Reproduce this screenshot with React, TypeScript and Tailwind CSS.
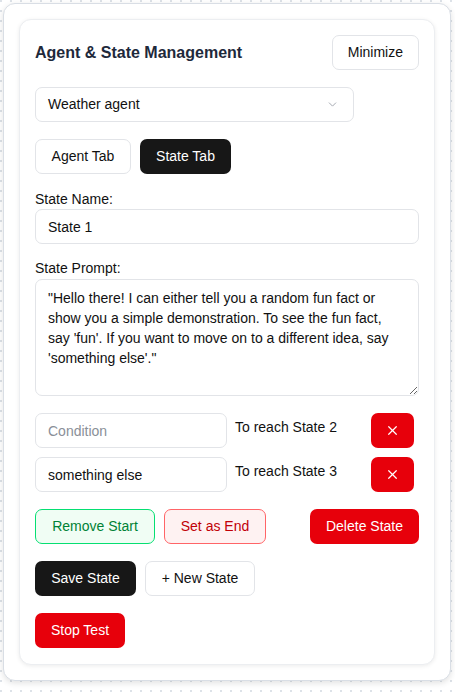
import React from "react";

const font = { fontFamily: '"Liberation Sans", Arial, sans-serif' };

export default function App() {
  return (
    <div
      className="min-h-[692px] w-[455px] bg-white bg-[radial-gradient(#dde2e8_1px,transparent_1px)] bg-[size:10px_10px] bg-[position:-4px_-4px] pt-[3px] pl-[3px] pr-[4px] pb-[6px]"
      style={font}
    >
      <div className="rounded-[12px] border border-[#d9dee5] bg-white px-[15px] pt-[15px] pb-[15px] shadow-[0_2px_6px_rgba(0,0,0,0.12)]">
        <div className="flex flex-col gap-[17px] rounded-[12px] border border-[#eceef1] bg-white px-[15px] pt-[15px] pb-[16px] shadow-[0_1px_4px_rgba(0,0,0,0.08)] text-[14px] text-[#111827]">
          <div className="flex items-center justify-between">
            <h2 className="text-[16px] font-bold text-[#1e293b]">Agent &amp; State Management</h2>
            <button className="h-[35px] rounded-[7px] border border-[#e2e4e8] bg-white px-[15px] text-[14px] text-[#111]">
              Minimize
            </button>
          </div>

          <div className="flex h-[35px] w-[319px] items-center justify-between rounded-[7px] border border-[#e2e4e8] bg-white pl-[12px] pr-[14px]">
            <span className="text-[#111]">Weather agent</span>
            <svg width="13" height="13" viewBox="0 0 24 24" fill="none" stroke="#a3a8b0" strokeWidth="1.8" strokeLinecap="round" strokeLinejoin="round">
              <path d="m6 9 6 6 6-6" />
            </svg>
          </div>

          <div className="flex gap-[9px]">
            <button className="h-[35px] w-[96px] rounded-[7px] border border-[#e2e4e8] bg-white text-[#111]">Agent Tab</button>
            <button className="h-[35px] w-[91px] rounded-[7px] bg-[#171717] text-white">State Tab</button>
          </div>

          <div className="-mt-[2px] flex flex-col">
            <label className="leading-[20px] text-[#111]">State Name:</label>
            <input
              className="h-[35px] w-full rounded-[7px] border border-[#e2e4e8] bg-white px-[12px] text-[14px] text-[#111] outline-none"
              defaultValue="State 1"
              style={font}
            />
            <label className="mt-[14px] leading-[20px] text-[#111]">State Prompt:</label>
            <textarea
              className="mt-[1px] h-[117px] w-full resize-y rounded-[7px] border border-[#e2e4e8] bg-white px-[12px] pt-[8px] text-[14px] leading-[20px] text-[#111] outline-none"
              defaultValue={`"Hello there! I can either tell you a random fun fact or show you a simple demonstration. To see the fun fact, say 'fun'. If you want to move on to a different idea, say 'something else'."`}
              style={font}
            />
          </div>

          <div className="flex flex-col gap-[9px]">
            {[
              { v: "", ph: "Condition", t: "To reach State 2" },
              { v: "something else", ph: "Condition", t: "To reach State 3" },
            ].map((r, i) => (
              <div key={i} className="flex items-start">
                <input
                  className="h-[35px] w-[192px] rounded-[7px] border border-[#e2e4e8] bg-white px-[12px] text-[14px] text-[#111] placeholder:text-[#8a8f98] outline-none"
                  placeholder={r.ph}
                  defaultValue={r.v}
                  style={font}
                />
                <span className="ml-[8px] mt-[5px] leading-[18px] text-[#111]">{r.t}</span>
                <button className="ml-auto mr-[5px] flex h-[35px] w-[43px] items-center justify-center rounded-[7px] bg-[#e7000b]">
                  <svg width="13" height="13" viewBox="0 0 24 24" fill="none" stroke="white" strokeWidth="2.2" strokeLinecap="round">
                    <path d="M5 5l14 14M19 5L5 19" />
                  </svg>
                </button>
              </div>
            ))}
          </div>

          <div className="flex gap-[9px]">
            <button className="h-[35px] w-[120px] rounded-[7px] border border-[#05df72] bg-[#f0fdf4] text-[#008236]">Remove Start</button>
            <button className="h-[35px] w-[102px] rounded-[7px] border border-[#ff6467] bg-[#fef2f2] text-[#c10007]">Set as End</button>
            <button className="ml-auto h-[35px] w-[109px] rounded-[7px] bg-[#e7000b] text-white">Delete State</button>
          </div>

          <div className="flex gap-[9px]">
            <button className="h-[35px] w-[101px] rounded-[7px] bg-[#171717] text-white">Save State</button>
            <button className="h-[35px] w-[110px] rounded-[7px] border border-[#e2e4e8] bg-white text-[#111]">+ New State</button>
          </div>

          <div className="flex">
            <button className="h-[35px] w-[90px] rounded-[7px] bg-[#e7000b] text-white">Stop Test</button>
          </div>
        </div>
      </div>
    </div>
  );
}
